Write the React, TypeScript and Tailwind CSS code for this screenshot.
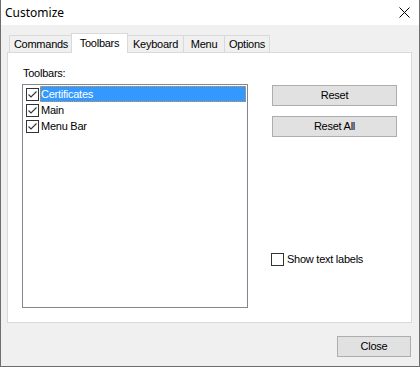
import React from "react";

const Check = () => (
  <div className="w-[13px] h-[13px] border border-[#333333] bg-white shrink-0 flex items-center justify-center">
    <svg width="11" height="11" viewBox="0 0 11 11">
      <polyline points="1.5,5.5 4,8 9.5,2.5" fill="none" stroke="#333333" strokeWidth="1.1" />
    </svg>
  </div>
);

const Row = ({ label, selected }: { label: string; selected?: boolean }) => (
  <div className="flex items-center h-[16px]">
    <div className="pl-[3px] pr-[1px] flex items-center">
      <Check />
    </div>
    {selected ? (
      <div className="ml-[0px] mr-[1px] flex-1 h-[16px] bg-[#3399ff] border border-dotted border-[#e8912d] text-white flex items-center leading-[13px] pl-[0px]">
        {label}
      </div>
    ) : (
      <div className="flex-1 leading-[13px] pl-[1px]">{label}</div>
    )}
  </div>
);

const Tab = ({ label, w, selected, first }: { label: string; w: string; selected?: boolean; first?: boolean }) => {
  if (selected) {
    return (
      <div className={`relative z-20 ml-[-2px] ${w} h-[20px] mb-[-1px] bg-white border-t border-l border-r border-[#d9d9d9] flex items-start justify-center pt-[3px] leading-[13px]`}>
        {label}
      </div>
    );
  }
  return (
    <div className={`relative z-10 ${first ? "ml-[2px]" : "ml-[-1px]"} ${w} h-[17px] bg-[#f0f0f0] border-t border-l border-r border-[#d9d9d9] flex items-start justify-center pt-[2px] leading-[13px]`}>
      {label}
    </div>
  );
};

export default function App() {
  return (
    <div className="w-[420px] h-[367px] flex flex-col border-l border-r border-b border-[#6e6e6e] bg-[#f0f0f0] text-black text-[11px] tracking-[-0.25px] font-['Liberation_Sans',Arial,sans-serif]">
      <div className="h-[25px] bg-white flex items-center justify-between pl-[4px] pr-[9px] shrink-0">
        <span className="text-[12px] tracking-normal font-['Noto_Sans',sans-serif] text-black">Customize</span>
        <svg width="11" height="11" viewBox="0 0 11 11">
          <line x1="0.5" y1="0.5" x2="10.5" y2="10.5" stroke="#000" strokeWidth="1" />
          <line x1="10.5" y1="0.5" x2="0.5" y2="10.5" stroke="#000" strokeWidth="1" />
        </svg>
      </div>
      <div className="flex-1 flex flex-col pl-[6px] pr-[7px] pt-[8px]">
        <div className="flex items-end h-[19px]">
          <Tab label="Commands" w="w-[64px]" first />
          <Tab label="Toolbars" w="w-[57px]" selected />
          <Tab label="Keyboard" w="w-[57px]" />
          <Tab label="Menu" w="w-[42px]" />
          <Tab label="Options" w="w-[46px]" />
        </div>
        <div className="h-[271px] bg-white border border-[#d9d9d9] flex pl-[14px] pt-[14px]">
          <div className="flex flex-col">
            <div className="leading-[13px] pl-[1px]">Toolbars:</div>
            <div className="mt-[4px] w-[226px] h-[224px] border border-[#82878f] bg-white pt-[1px]">
              <Row label="Certificates" selected />
              <Row label="Main" />
              <Row label="Menu Bar" />
            </div>
          </div>
          <div className="flex flex-col ml-[24px] pt-[18px]">
            <div className="w-[125px] h-[21px] bg-[#e1e1e1] border border-[#adadad] flex items-center justify-center leading-[13px]">Reset</div>
            <div className="mt-[10px] w-[125px] h-[21px] bg-[#e1e1e1] border border-[#adadad] flex items-center justify-center leading-[13px]">Reset All</div>
            <div className="mt-[116px] ml-[-1px] flex items-center">
              <div className="w-[13px] h-[13px] border border-[#333333] bg-white" />
              <span className="ml-[3px] leading-[13px]">Show text labels</span>
            </div>
          </div>
        </div>
        <div className="flex justify-end pt-[13px]">
          <div className="mr-[1px] w-[74px] h-[21px] bg-[#e1e1e1] border border-[#adadad] flex items-center justify-center leading-[13px]">Close</div>
        </div>
      </div>
    </div>
  );
}
